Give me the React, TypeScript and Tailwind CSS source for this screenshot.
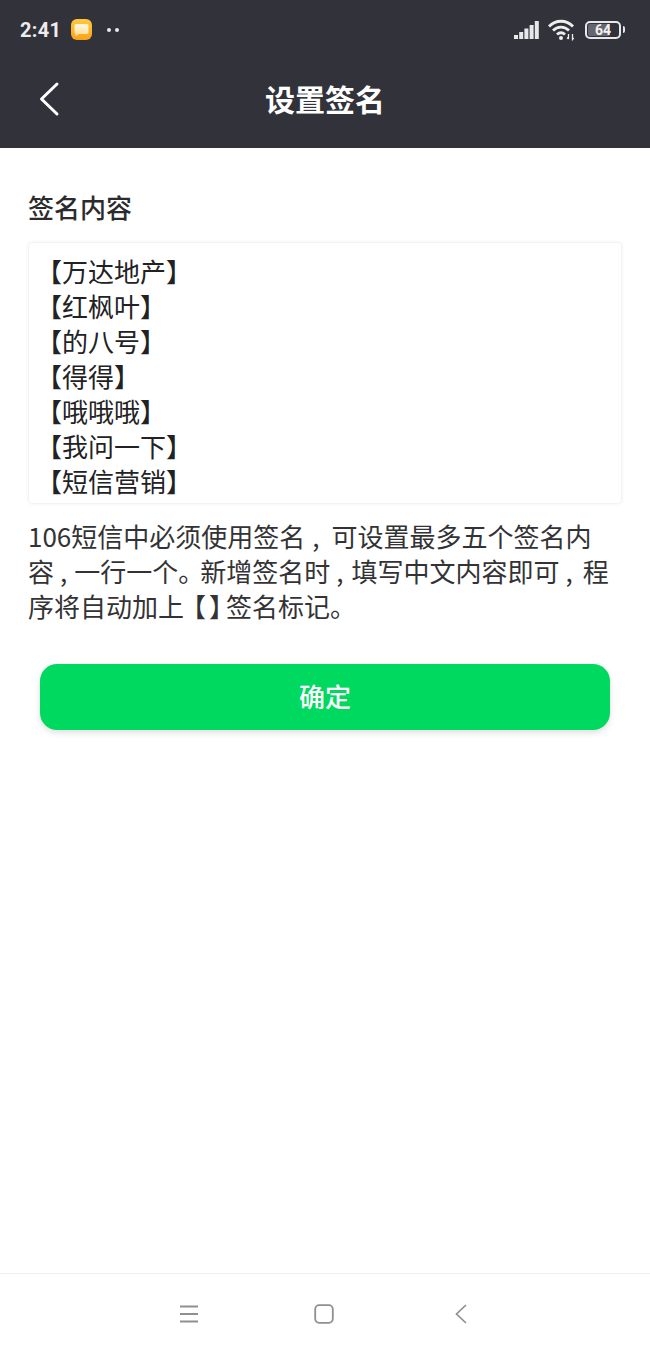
const font = { fontFamily: '"Noto Sans CJK SC", "Noto Sans", sans-serif' };

function Signal() {
  return (
    <svg width="25" height="20" viewBox="0 0 25 20" fill="#e8e8ea">
      <path d="M0 15h4v4H0z M5.2 12h4v7h-4z M10.4 8.5h4V19h-4z M15.6 5h4v14h-4z M20.8 1h4v18h-4z" />
    </svg>
  );
}

function Wifi() {
  return (
    <svg width="28" height="24" viewBox="0 0 28 24" fill="none" stroke="#eeeeef" strokeWidth="2.8">
      <path d="M1 8.5C7.5 1.5 18.5 1.5 25 8.5" />
      <path d="M5 12.5C9.5 8 16.5 8 21 12.5" />
      <path d="M9 16.5C11.5 14.2 14.5 14.2 17 16.5" />
      <circle cx="13" cy="20" r="2" fill="#eeeeef" stroke="none" />
      <path d="M20.5 21v-5M20.5 21l-1.4-1.5M24.5 16v5.5l1.2-1.5" strokeWidth="1.3" />
    </svg>
  );
}

function Battery() {
  return (
    <div className="flex items-center gap-[2px]">
      <div className="relative flex h-[18px] w-[36px] items-center justify-center overflow-hidden rounded-[5px] border-2 border-[#e8e8ea]">
        <div className="absolute inset-y-[1px] left-[1px] w-[22px] rounded-[2px] bg-[#66666c]" />
        <span className="relative text-[14px] leading-none font-bold text-[#f1f1f2]" style={{ fontFamily: '"Roboto", sans-serif' }}>64</span>
      </div>
      <div className="h-[7px] w-[2px] rounded-r-sm bg-[#e8e8ea]" />
    </div>
  );
}

function Comma({ w }: { w: string }) {
  return <span className={w}>,</span>;
}

export default function App() {
  const signatures = ["【万达地产】", "【红枫叶】", "【的八号】", "【得得】", "【哦哦哦】", "【我问一下】", "【短信营销】"];
  return (
    <div className="flex h-[1351px] w-[650px] flex-col overflow-hidden bg-white" style={font}>
      <header className="flex h-[148px] shrink-0 flex-col bg-[#31323a] text-white">
        <div className="flex h-[59px] shrink-0 items-center justify-between pr-[25px] pl-[20px]">
          <div className="flex items-center">
            <span className="text-[20px] leading-none font-bold tracking-[0.3px] text-[#ededee]" style={{ fontFamily: '"Roboto", sans-serif' }}>2:41</span>
            <div className="ml-[10px] flex h-[21px] w-[21px] items-center justify-center rounded-[6px] bg-gradient-to-b from-[#ffc93c] to-[#f9a11b]">
              <svg width="15" height="14" viewBox="0 0 15 14">
                <defs>
                  <linearGradient id="bubble" x1="0" y1="0" x2="0" y2="1">
                    <stop offset="0" stopColor="#fff8e2" />
                    <stop offset="1" stopColor="#ffdc8c" />
                  </linearGradient>
                </defs>
                <path d="M2 1h11a1.5 1.5 0 0 1 1.5 1.5v7A1.5 1.5 0 0 1 13 11H5l-3.5 2.5V11A1.5 1.5 0 0 1 .5 9.5v-7A1.5 1.5 0 0 1 2 1z" fill="url(#bubble)" />
              </svg>
            </div>
            <div className="ml-[15px] flex gap-[4px]">
              <div className="h-[4px] w-[4px] rounded-full bg-[#e8e8ea]" />
              <div className="h-[4px] w-[4px] rounded-full bg-[#e8e8ea]" />
            </div>
          </div>
          <div className="flex items-center gap-[9px]">
            <Signal />
            <Wifi />
            <Battery />
          </div>
        </div>
        <div className="relative flex h-[81px] items-start justify-center">
          <span className="mt-[18px] text-[30px] leading-[42px] font-bold">设置签名</span>
          <svg className="absolute top-[22px] left-[38px]" width="22" height="36" viewBox="0 0 22 36" fill="none" stroke="white" strokeWidth="3" strokeLinecap="round" strokeLinejoin="round">
            <path d="M19 3 L3.5 18 L19 33" />
          </svg>
        </div>
      </header>

      <main className="flex-1 px-[28px] text-[#2b2b2d]">
        <h2 className="mt-[41px] text-[26px] leading-[36px] font-medium">签名内容</h2>
        <div className="mt-[17px] h-[262px] rounded-[4px] border border-[#f3f3f4] pt-[10px] pl-[7px] text-[26px] leading-[35px] text-[#222224] shadow-[0_0_4px_rgba(0,0,0,0.05)]">
          {signatures.map((s) => (
            <div key={s}>{s}</div>
          ))}
        </div>
        <div className="mt-[14px] text-[26px] leading-[35px] whitespace-nowrap text-[#333335]">
          <div>
            106短信中必须使用签名
            <Comma w="pr-[12px] pl-[7px]" />
            可设置最多五个签名内
          </div>
          <div>
            容
            <Comma w="pr-[7px] pl-[6px]" />
            一行一个
            <span className="pr-[9px] [font-feature-settings:'halt']">。</span>
            新增签名时
            <Comma w="pr-[8px] pl-[6px]" />
            填写中文内容即可
            <Comma w="pr-[10px] pl-[6px]" />
            程
          </div>
          <div>
            序将自动加上
            <span className="mr-[3px] ml-[9px] [font-feature-settings:'halt']">【</span>
            <span className="mr-[4px] [font-feature-settings:'halt']">】</span>
            签名标记。
          </div>
        </div>
        <button className="mx-[12px] mt-[41px] flex h-[66px] w-[570px] items-center justify-center rounded-[17px] bg-[#00d95f] pb-[3px] text-[26px] font-medium text-white shadow-[0_3px_6px_rgba(0,0,0,0.12)]">
          确定
        </button>
      </main>

      <nav className="flex h-[78px] shrink-0 items-center border-t border-[#eeeeee] pt-[3px] pl-[180px]">
        <svg width="18" height="18" viewBox="0 0 18 18" fill="none" stroke="#8f8f8f" strokeWidth="1.8">
          <path d="M0 1.5h18M0 9h18M0 16.5h18" />
        </svg>
        <svg className="ml-[116px]" width="20" height="20" viewBox="0 0 20 20" fill="none" stroke="#8f8f8f" strokeWidth="1.8">
          <rect x="1.2" y="1.2" width="17.6" height="17.6" rx="4" />
        </svg>
        <svg className="ml-[121px]" width="12" height="20" viewBox="0 0 12 20" fill="none" stroke="#8f8f8f" strokeWidth="1.7">
          <path d="M11 1 L1.5 10 L11 19" />
        </svg>
      </nav>
    </div>
  );
}
